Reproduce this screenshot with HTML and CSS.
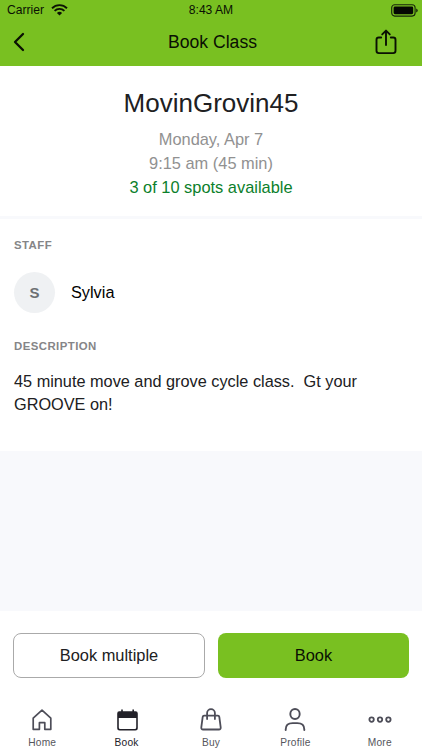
FILE: index.html
```html
<!DOCTYPE html>
<html lang="en">
<head>
<meta charset="utf-8">
<title>Book Class</title>
<link rel="stylesheet" href="styles.css">
</head>
<body>
<div class="app">
  <header class="header">
    <div class="status">
      <div class="carrier"><span>Carrier</span>
        <svg width="17" height="12" viewBox="0 0 17 12" fill="none" stroke="#0c1204" stroke-width="1.9"><path d="M1 4.2a10.7 10.7 0 0 1 15 0M3.6 6.9a7 7 0 0 1 9.8 0"/><path d="M8.5 11.6 5.9 9a3.7 3.7 0 0 1 5.2 0z" fill="#0c1204" stroke="none"/></svg>
      </div>
      <span class="time">8:43 AM</span>
      <svg class="battery" width="27" height="13" viewBox="0 0 27 13"><rect x=".7" y=".7" width="23.4" height="11.4" rx="3" fill="none" stroke="#16240a" stroke-width="1.1"/><rect x="2.6" y="2.6" width="19.6" height="7.6" rx="1.4" fill="#050802"/><path d="M25.2 4.4q1.5.5 1.5 2t-1.5 2z" fill="#16240a"/></svg>
    </div>
    <nav class="navbar">
      <svg width="12" height="20" viewBox="0 0 12 20" fill="none" stroke="#0a1003" stroke-width="2.3" stroke-linecap="round" stroke-linejoin="round"><path d="M10 2 2 10l8 8"/></svg>
      <h1>Book Class</h1>
      <svg width="22" height="26" viewBox="0 0 22 26" fill="none" stroke="#0a1003" stroke-width="1.9" stroke-linecap="round" stroke-linejoin="round"><path d="M6.2 8.5H3.8Q1.5 8.5 1.5 10.8v11Q1.5 24.1 3.8 24.1h14.4q2.3 0 2.3-2.3v-11q0-2.3-2.3-2.3h-2.4M11 16V2M7.2 5.4 11 1.6l3.8 3.8"/></svg>
    </nav>
  </header>
  <section class="summary">
    <h2>MovinGrovin45</h2>
    <p>Monday, Apr 7</p>
    <p>9:15 am (45 min)</p>
    <p class="spots">3 of 10 spots available</p>
  </section>
  <main class="details">
    <h3>STAFF</h3>
    <div class="staff"><span class="avatar">S</span><span>Sylvia</span></div>
    <h3>DESCRIPTION</h3>
    <p class="description">45 minute move and grove cycle class.&nbsp; Gt your GROOVE on!</p>
  </main>
  <footer class="footer">
    <div class="actions"><button class="secondary">Book multiple</button><button class="primary">Book</button></div>
    <nav class="tabs">
      <a class="tab"><svg width="24" height="24" viewBox="0 0 24 24" fill="none" stroke="#4d4d58" stroke-width="1.7" stroke-linejoin="round"><path d="M3.2 21.3V10.2L12 2.2l8.8 8v11.1h-6v-6.6H9.4v6.6z"/></svg><span>Home</span></a>
      <a class="tab active"><svg width="24" height="24" viewBox="0 0 24 24"><path d="M4.2 3.3h2V1.5h1.6v1.8h9.6V1.5H19v1.8h1.6q2.2 0 2.2 2.2v14.6q0 2.5-2.5 2.5H4.7q-2.5 0-2.5-2.5V5.5q0-2.2 2-2.2z" fill="#222129"/><path d="M3.8 10.1h17.4v9.4q0 1.5-1.5 1.5H5.3q-1.5 0-1.5-1.5z" fill="#fff"/></svg><span>Book</span></a>
      <a class="tab"><svg width="24" height="24" viewBox="0 0 24 24" fill="none" stroke="#4d4d58" stroke-width="1.8" stroke-linecap="round" stroke-linejoin="round"><path d="M5.1 7.7h13.8q1.2 0 1.4 1.2l1.4 10.5q.2 2.1-1.8 2.1H4.1q-2 0-1.8-2.1L3.7 8.9q.2-1.2 1.4-1.2zM8.1 11V5.1a3.9 3.9 0 0 1 7.8 0V11"/></svg><span>Buy</span></a>
      <a class="tab"><svg width="24" height="24" viewBox="0 0 24 24" fill="none" stroke="#4d4d58" stroke-width="1.9" stroke-linecap="round"><ellipse cx="12" cy="6" rx="4.7" ry="5"/><path d="M2.7 22.1v-.7q0-6.3 7-6.3h4.6q7 0 7 6.3v.7"/></svg><span>Profile</span></a>
      <a class="tab"><svg width="24" height="24" viewBox="0 0 24 24" fill="none" stroke="#4d4d58" stroke-width="1.8"><circle cx="3.6" cy="11.6" r="2.2"/><circle cx="12" cy="11.6" r="2.2"/><circle cx="20.4" cy="11.6" r="2.2"/></svg><span>More</span></a>
    </nav>
  </footer>
</div>
</body>
</html>
```
FILE: styles.css
```css
* { box-sizing: border-box; margin: 0; padding: 0; }
body { font-family: "Liberation Sans", Arial, sans-serif; background: #f8f9fc; color: #202022; }
h1, h2 { font-weight: 400; }
svg { display: block; flex: none; }
.app { height: 750px; display: flex; flex-direction: column; }
.header { height: 66px; background: #79c021; color: #0a1003; }
.status { height: 20px; display: grid; grid-template-columns: 1fr auto 1fr; align-items: center; padding: 0 4px 0 7px; font-size: 12.1px; }
.time { margin-left: -3px; }
.carrier { display: flex; align-items: center; gap: 7px; }
.battery { justify-self: end; }
.navbar { height: 46px; display: grid; grid-template-columns: 1fr auto 1fr; align-items: center; padding: 0 25px 2px; }
.navbar svg:first-child { margin-left: -12px; }
.navbar svg:last-child { justify-self: end; }
.navbar h1 { font-size: 17.6px; line-height: 22px; padding-left: 3px; }
.summary { height: 153px; background: #fff; border-bottom: 3px solid #f8f9fc; padding-top: 21px; text-align: center; }
.summary h2 { font-size: 26px; line-height: 32px; margin-bottom: 7.5px; }
.summary p { font-size: 16.4px; line-height: 24.4px; color: #919191; }
.summary .spots { color: #0b802b; }
.details { height: 232px; background: #fff; padding: 18px 14px 0; }
.details h3 { font-size: 11.4px; line-height: 16px; letter-spacing: .45px; color: #858587; }
.staff { display: flex; align-items: center; gap: 16px; height: 41px; margin: 19px 0 25px; font-size: 16.3px; color: #000; }
.avatar { width: 41px; height: 41px; border-radius: 50%; background: #eff1f3; color: #6d7073; font-size: 15px; font-weight: 700; display: flex; align-items: center; justify-content: center; }
.description { margin-top: 16px; font-size: 16.3px; line-height: 22.5px; }
.footer { height: 139px; margin-top: auto; background: #fff; padding-top: 22px; }
.actions { display: grid; grid-template-columns: 192px 191px; gap: 13px; padding-left: 13px; }
.actions button { height: 45px; border-radius: 8px; font-family: inherit; font-size: 16.4px; }
.secondary { background: #fff; border: 1px solid #aaa; color: #202022; }
.primary { background: #79c021; border: 0; color: #0a1003; }
.tabs { display: grid; grid-template-columns: repeat(5, 1fr); margin-top: 30px; }
.tab { display: flex; flex-direction: column; align-items: center; gap: 5px; font-size: 10.2px; line-height: 12px; letter-spacing: .2px; color: #55555c; }
.active { color: #222129; }
```
